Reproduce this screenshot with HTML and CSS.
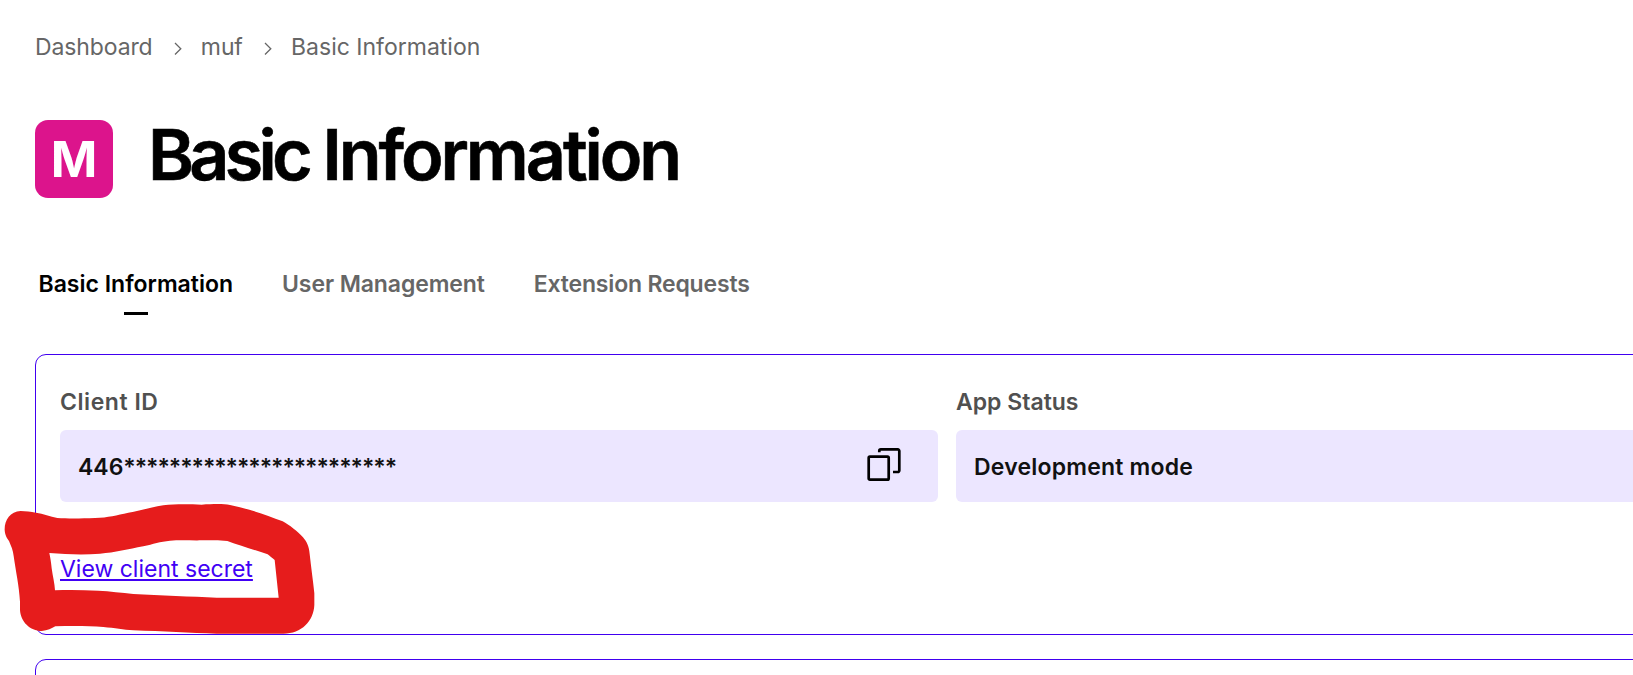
FILE: index.html
```html
<!DOCTYPE html>
<html lang="en">
<head>
<meta charset="utf-8">
<title>Basic Information</title>
<link rel="stylesheet" href="styles.css">
</head>
<body>
<main class="page">
  <nav class="breadcrumb">
    <span class="crumb">Dashboard</span>
    <svg class="chevron" viewBox="0 0 8 14"><path d="M1 1 6.800 6.700 1 12.500"/></svg>
    <span class="crumb">muf</span>
    <svg class="chevron" viewBox="0 0 8 14"><path d="M1 1 6.800 6.700 1 12.500"/></svg>
    <span class="crumb crumb-current">Basic Information</span>
  </nav>
  <header class="heading">
    <div class="logo">M</div>
    <h1 class="title"><span class="title-first">Basic</span> <span class="title-second">Information</span></h1>
  </header>
  <nav class="tabs">
    <a class="tab tab-active">Basic Information</a>
    <a class="tab tab-users">User Management</a>
    <a class="tab tab-requests">Extension Requests</a>
  </nav>
  <section class="card">
    <div class="fields">
      <div class="field">
        <div class="label label-id">Client ID</div>
        <div class="value"><span class="value-text">446<span class="stars">************************</span></span>
          <svg class="copy" viewBox="0 0 36 36"><rect x="2.700" y="8.700" width="20" height="23" rx="1.200"/><path d="M13.300 4.300V2.900a1.500 1.500 0 0 1 1.500-1.500H31.800A1.500 1.500 0 0 1 33.300 2.900V22.500a1.500 1.500 0 0 1-1.500 1.500H27"/></svg>
        </div>
      </div>
      <div class="field">
        <div class="label">App Status</div>
        <div class="value"><span class="value-text value-status">Development mode</span></div>
      </div>
    </div>
    <a class="link">View client secret</a>
  </section>
  <section class="card card-next"></section>
  <svg class="marker" viewBox="0 0 1020 555"><path fill-rule="evenodd" d="M62 63C30 65 13 91 14 120C15 137 22 146 27 153C34 170 39 180 41 198C48 248 57 285 60 335V360C62 395 90 423 125 423C143 422 155 415 166 409C220 407 270 408 310 411C345 414 370 419 400 421C490 424 570 429 650 431H850C905 431 941 393 943 345V310C939 270 933 230 929 192C927 168 920 155 909 142C893 124 868 105 848 94C795 73 740 55 690 45C670 41 640 42 605 44C565 43 525 42 490 46C450 52 420 63 385 68C350 75 325 83 285 84C240 86 200 86 172 84C150 80 130 70 108 68C92 66 77 63 62 63ZM148 189C200 193 250 195 300 191C345 188 385 177 430 169C460 162 480 155 510 152C545 149 575 152 605 151C635 151 655 149 682 153C720 167 765 180 803 193C811 199 817 205 824 210L836 323H650C575 320 480 316 400 312C365 308 330 304 295 302C250 300 205 299 165 301C164 280 158 258 155 235C153 215 151 203 148 189Z"/></svg>
</main>
</body>
</html>
```
FILE: styles.css
```css
*{box-sizing:border-box}
body{margin:0;background:#fff;font-family:Inter,"Liberation Sans",sans-serif;font-size:23px;line-height:28px;color:#000}
.page{position:relative;width:100%;height:675px;overflow:hidden;padding:33px 0 0 35px}
.breadcrumb{display:flex;align-items:center;height:28px;color:#666;letter-spacing:-.12px}
.crumb-current{letter-spacing:0}
.chevron{width:8px;height:14px;margin:3px 19.300px 0 21px;fill:none;stroke:#666;stroke-width:1.300}
.heading{display:flex;gap:35px;height:78px;margin-top:59px}
.logo{width:78px;height:78px;border-radius:13px;background:#dc148c;color:#fff;display:flex;align-items:center;justify-content:center;font-size:50px;font-weight:700}
.title{margin:-7px 0 0;font-size:70px;line-height:84px;font-weight:600;white-space:nowrap;-webkit-text-stroke:.6px #000}
.title-first{letter-spacing:-4.800px;margin-right:-3px}
.title-second{letter-spacing:-3.100px}
.tabs{display:flex;gap:49px;margin:72px 0 0 3.500px;height:45px}
.tab{font-weight:600;color:#666;display:flex;flex-direction:column;align-items:center}
.tab-active{color:#000}
.tab-active::after{content:"";width:24px;height:3px;margin-top:14px;background:#000}
.tab-users{letter-spacing:-.1px}
.tab-requests{letter-spacing:-.18px}
.card{width:1850px;height:281px;margin-top:39px;border:1px solid #4100f0;border-radius:11px;padding:33px 24px}
.card-next{margin-top:24px}
.fields{display:grid;grid-template-columns:878px 878px;gap:18px}
.label{font-weight:600;color:#505050;margin-bottom:14px}
.label-id{letter-spacing:.550px}
.value{display:flex;align-items:center;justify-content:space-between;height:72px;border-radius:6px;padding:0 36px 0 18px;background:#ece6ff;font-weight:600;color:#111}
.value-text{padding-top:2px}
.value-status{letter-spacing:.2px}
.stars{letter-spacing:-1.050px}
.copy{width:36px;height:36px;fill:none;stroke:#000;stroke-width:2.700}
.link{display:inline-block;margin-top:53px;color:#4100f5;text-decoration:underline;text-decoration-thickness:2px;text-underline-offset:2px}
.marker{position:absolute;left:0;top:490px;width:340px;height:185px;fill:#e61c1c}
```
